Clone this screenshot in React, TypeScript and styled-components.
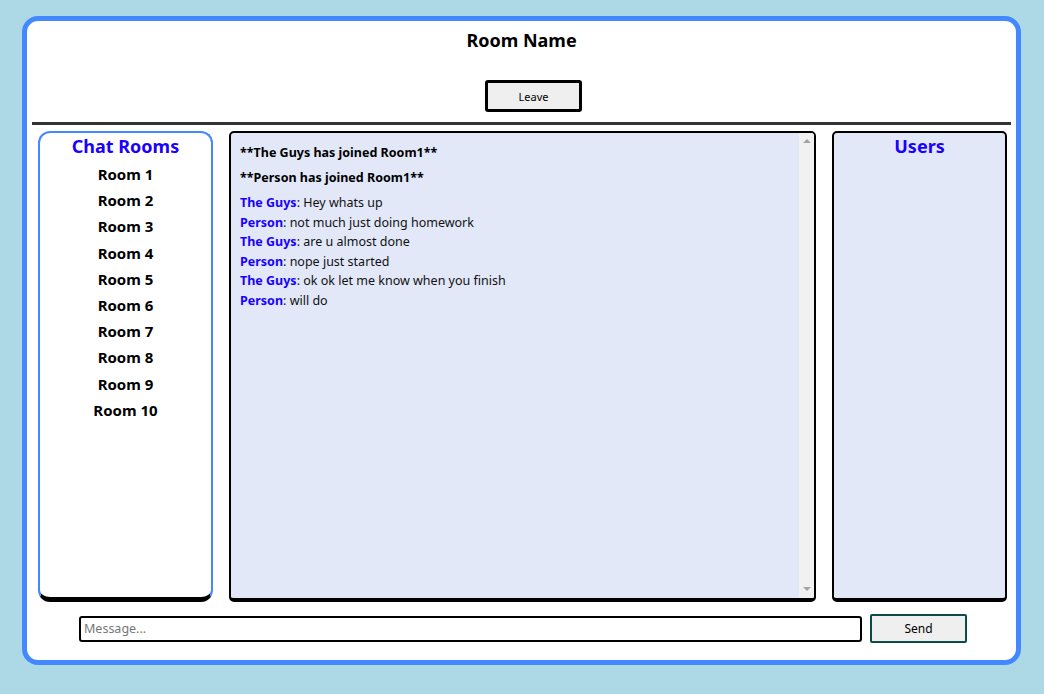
import React from "react";
import styled, { createGlobalStyle } from "styled-components";

const Global = createGlobalStyle`
  html, body { margin: 0; padding: 0; }
  body {
    background: #add8e6;
    font-family: "Noto Sans", "Open Sans", sans-serif;
  }
`;

const Page = styled.div`
  padding: 16px 23px 0 22px;
`;

const Frame = styled.div`
  box-sizing: border-box;
  width: 999px;
  height: 649px;
  background: #fff;
  border: 5px solid #4488ff;
  border-radius: 16px;
  display: flex;
  flex-direction: column;
  align-items: stretch;
`;

const Header = styled.div`
  display: flex;
  flex-direction: column;
  align-items: center;
  padding-top: 7px;
`;

const Title = styled.h1`
  margin: 0;
  font-size: 18px;
  line-height: 24px;
  font-weight: 700;
  color: #000;
`;

const LeaveButton = styled.button`
  margin: 28px 0 0 24px;
  box-sizing: border-box;
  width: 97px;
  height: 32px;
  background: #efefef;
  border: 3px solid #000;
  border-radius: 3px;
  font-family: inherit;
  font-size: 11px;
  color: #000;
`;

const Divider = styled.div`
  margin: 10px 5px 0 5px;
  height: 3px;
  background: #333;
`;

const Panels = styled.div`
  margin-top: 6px;
  padding: 0 9px 0 11px;
  display: grid;
  grid-template-columns: 175px 1fr 175px;
  column-gap: 16px;
  height: 471px;
`;

const RoomsPanel = styled.div`
  box-sizing: border-box;
  border: 2px solid #4488ff;
  border-bottom: 5px solid #000;
  border-radius: 12px;
  background: #fff;
  display: flex;
  flex-direction: column;
  align-items: center;
`;

const PanelTitle = styled.h2`
  margin: 0;
  font-size: 18px;
  line-height: 26px;
  font-weight: 700;
  color: #1a00ff;
`;

const RoomList = styled.ul`
  list-style: none;
  margin: 2px 0 0 0;
  padding: 0;
  display: flex;
  flex-direction: column;
  align-items: center;
`;

const RoomItem = styled.li`
  font-size: 15px;
  font-weight: 700;
  line-height: 26.2px;
  color: #000;
`;

const MessagesPanel = styled.div`
  box-sizing: border-box;
  border: 2px solid #000;
  border-bottom: 4px solid #000;
  border-radius: 5px;
  background: #e2e8f8;
  display: flex;
  overflow: hidden;
`;

const MessageList = styled.div`
  flex: 1;
  overflow: hidden;
  padding: 8px 10px 8px 9px;
`;

const ScrollTrack = styled.div`
  width: 15px;
  flex: none;
  background: #f1f1f1;
  display: flex;
  flex-direction: column;
  justify-content: space-between;
  align-items: center;
  padding: 6px 0 7px;
`;

const Arrow = styled.span<{ $dir: "up" | "down" }>`
  width: 0;
  height: 0;
  border-left: 4px solid transparent;
  border-right: 4px solid transparent;
  ${(p) =>
    p.$dir === "up"
      ? "border-bottom: 4px solid #a3a3a3;"
      : "border-top: 4px solid #a3a3a3;"}
`;

const Notice = styled.p`
  margin: 3px 0 8px 0;
  font-size: 12.5px;
  font-weight: 700;
  line-height: 17px;
  color: #000;
  &:last-of-type {
    margin-bottom: 7px;
  }
`;

const Line = styled.div`
  font-size: 12.5px;
  line-height: 19.6px;
  color: #111;
`;

const Author = styled.span`
  font-weight: 700;
  color: #1a00ff;
`;

const UsersPanel = styled.div`
  box-sizing: border-box;
  border: 2px solid #000;
  border-bottom: 4px solid #000;
  border-radius: 5px;
  background: #e2e8f8;
  display: flex;
  flex-direction: column;
  align-items: center;
`;

const InputRow = styled.form`
  margin-top: 12px;
  display: flex;
  justify-content: center;
  align-items: center;
  gap: 8px;
  padding-left: 3px;
`;

const MessageInput = styled.input`
  box-sizing: border-box;
  width: 783px;
  height: 26px;
  border: 2px solid #000;
  border-radius: 3px;
  padding: 0 3px;
  font-family: inherit;
  font-size: 12.5px;
  outline: none;
  &::placeholder {
    color: #777;
  }
`;

const SendButton = styled.button`
  box-sizing: border-box;
  width: 97px;
  height: 29px;
  background: #efefef;
  border: 2px solid #0d4a4a;
  border-radius: 2px;
  font-family: inherit;
  font-size: 12px;
  color: #000;
`;

const rooms = Array.from({ length: 10 }, (_, i) => `Room ${i + 1}`);

const chat: [string, string][] = [
  ["The Guys", "Hey whats up"],
  ["Person", "not much just doing homework"],
  ["The Guys", "are u almost done"],
  ["Person", "nope just started"],
  ["The Guys", "ok ok let me know when you finish"],
  ["Person", "will do"],
];

export default function App() {
  return (
    <Page>
      <Global />
      <Frame>
        <Header>
          <Title>Room Name</Title>
          <LeaveButton>Leave</LeaveButton>
        </Header>
        <Divider />
        <Panels>
          <RoomsPanel>
            <PanelTitle>Chat Rooms</PanelTitle>
            <RoomList>
              {rooms.map((r) => (
                <RoomItem key={r}>{r}</RoomItem>
              ))}
            </RoomList>
          </RoomsPanel>
          <MessagesPanel>
            <MessageList>
              <Notice>**The Guys has joined Room1**</Notice>
              <Notice>**Person has joined Room1**</Notice>
              {chat.map(([who, text], i) => (
                <Line key={i}>
                  <Author>{who}</Author>: {text}
                </Line>
              ))}
            </MessageList>
            <ScrollTrack>
              <Arrow $dir="up" />
              <Arrow $dir="down" />
            </ScrollTrack>
          </MessagesPanel>
          <UsersPanel>
            <PanelTitle>Users</PanelTitle>
          </UsersPanel>
        </Panels>
        <InputRow onSubmit={(e) => e.preventDefault()}>
          <MessageInput placeholder="Message..." />
          <SendButton type="submit">Send</SendButton>
        </InputRow>
      </Frame>
    </Page>
  );
}
